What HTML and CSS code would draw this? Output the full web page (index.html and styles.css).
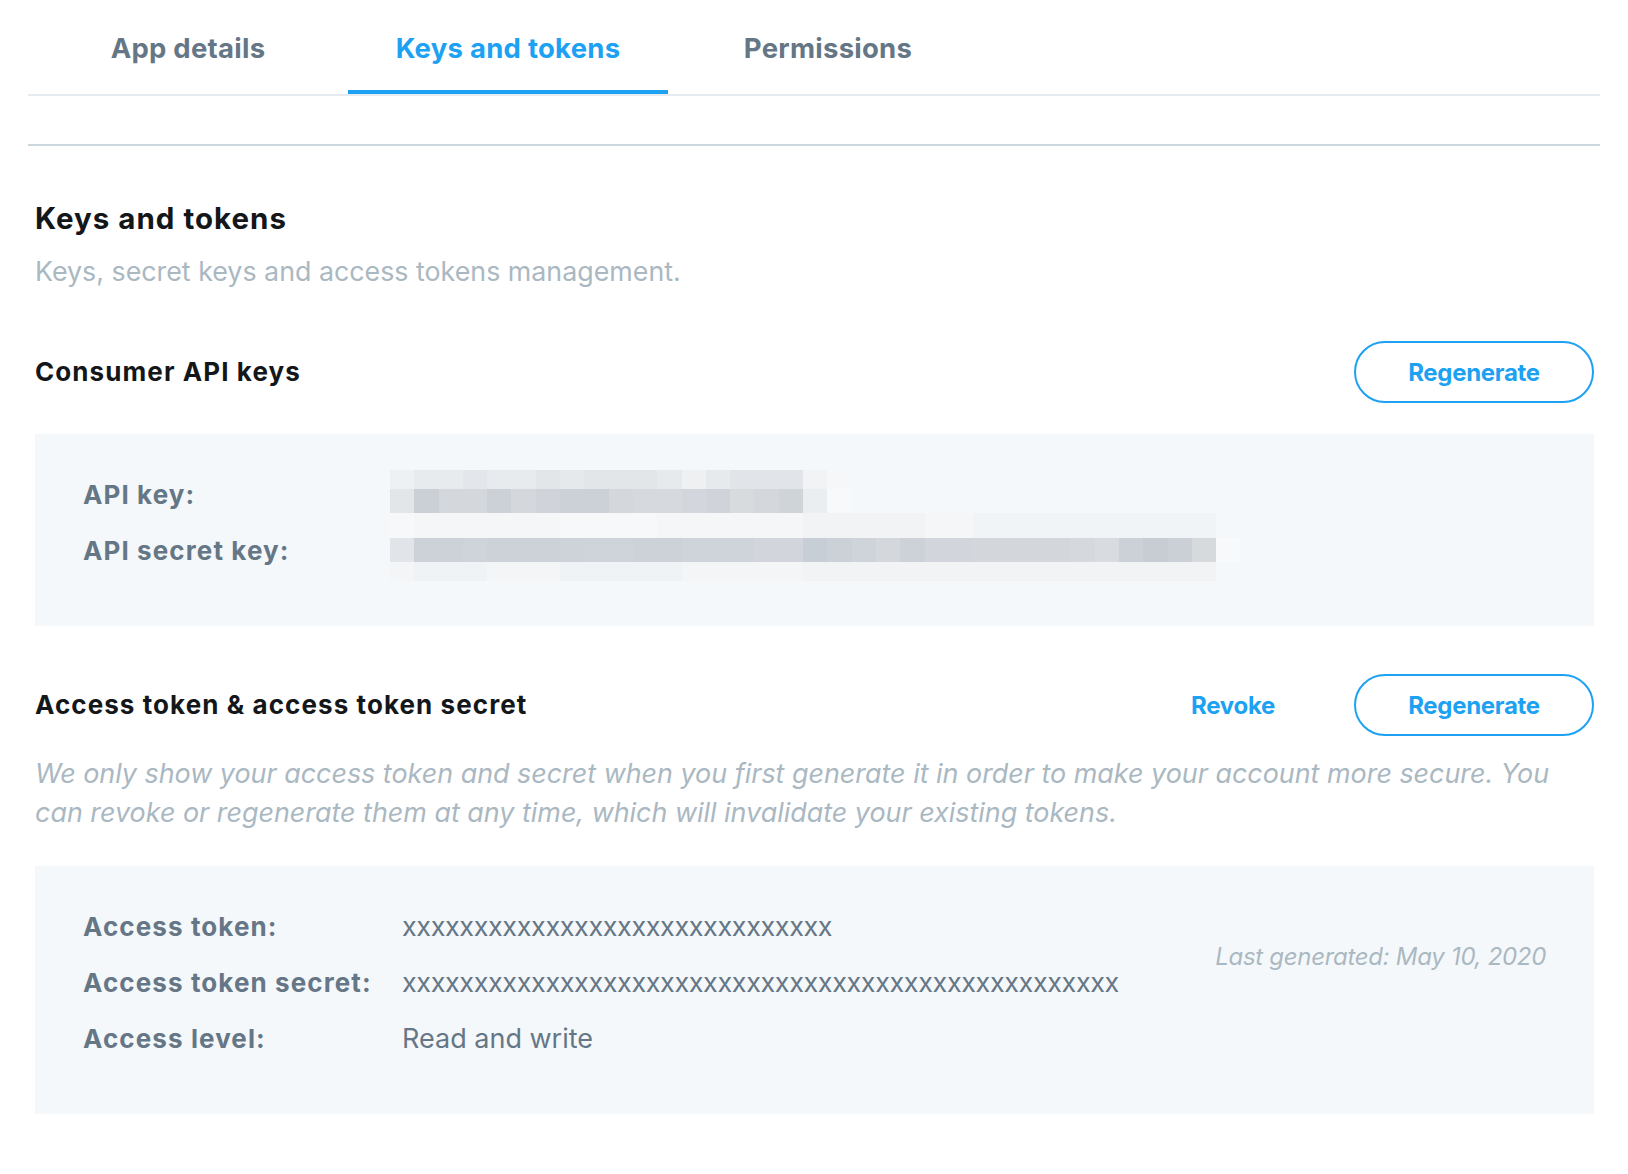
FILE: index.html
```html
<!DOCTYPE html>
<html lang="en">
<head>
<meta charset="utf-8">
<title>Keys and tokens</title>
<link rel="stylesheet" href="styles.css">
</head>
<body>
<div class="page">
  <nav class="tabs">
    <div class="tab">App details</div>
    <div class="tab active">Keys and tokens</div>
    <div class="tab">Permissions</div>
  </nav>
  <div class="divider"></div>

  <main class="content">
    <h1 class="title">Keys and tokens</h1>
    <p class="subtitle">Keys, secret keys and access tokens management.</p>

    <div class="section-head consumer-head">
      <h2 class="section-title">Consumer API keys</h2>
      <div class="actions">
        <button class="btn-outline">Regenerate</button>
      </div>
    </div>

    <div class="panel panel-keys">
      <div class="kv kv-keys">
        <div class="label">API key:</div>
        <div class="blurred" aria-label="hidden key">
          <div class="px-row r1"></div>
          <div class="px-row r2"></div>
          <div class="px-row r3"></div>
          <div class="px-row r4"></div>
          <div class="px-row r5"></div>
        </div>
        <div class="label">API secret key:</div>
      </div>
    </div>

    <div class="section-head access-head">
      <h2 class="section-title">Access token &amp; access token secret</h2>
      <div class="actions">
        <button class="btn-link">Revoke</button>
        <button class="btn-outline">Regenerate</button>
      </div>
    </div>
    <p class="note">We only show your access token and secret when you first generate it in order to make your account more secure. You can revoke or regenerate them at any time, which will invalidate your existing tokens.</p>

    <div class="panel panel-access">
      <div class="kv kv-access">
        <div class="label">Access token:</div>
        <div class="value token">xxxxxxxxxxxxxxxxxxxxxxxxxxxxxx</div>
        <div class="label">Access token secret:</div>
        <div class="value token">xxxxxxxxxxxxxxxxxxxxxxxxxxxxxxxxxxxxxxxxxxxxxxxxxx</div>
        <div class="label">Access level:</div>
        <div class="value">Read and write</div>
      </div>
      <div class="generated">Last generated: May 10, 2020</div>
    </div>
  </main>
</div>
</body>
</html>
```

FILE: styles.css
```css
* { box-sizing: border-box; }

html, body {
  margin: 0;
  padding: 0;
  background: #ffffff;
}

body {
  font-family: Inter, "Noto Sans", "Liberation Sans", sans-serif;
  color: #14171a;
}

.page {
  padding: 0 28px;
}

/* Tabs */
.tabs {
  display: flex;
  height: 96px;
  border-bottom: 2px solid #e6ecf0;
}

.tab {
  width: 320px;
  height: 94px;
  padding-top: 32px;
  text-align: center;
  font-size: 27.5px;
  line-height: 32px;
  font-weight: 700;
  letter-spacing: 0.25px;
  color: #657786;
}

.tab.active {
  color: #1da1f2;
  box-shadow: inset 0 -4px 0 #1da1f2;
}

.divider {
  margin-top: 48px;
  height: 2px;
  background: #ccd6dd;
}

/* Content */
.content {
  padding: 0 6px 60px 7px;
}

.title {
  margin: 54px 0 0;
  font-size: 29.5px;
  line-height: 36px;
  font-weight: 700;
  letter-spacing: 1px;
  color: #14171a;
}

.subtitle {
  margin: 17px 0 0;
  font-size: 26.8px;
  line-height: 36px;
  font-weight: 400;
  color: #aab8c2;
}

.section-head {
  display: flex;
  align-items: center;
  justify-content: space-between;
  height: 62px;
}

.consumer-head { margin-top: 52px; }
.access-head { margin-top: 48px; }

.section-title {
  margin: 0;
  font-size: 26px;
  line-height: 32px;
  font-weight: 700;
  letter-spacing: 1.08px;
  color: #14171a;
}

.actions {
  display: flex;
  align-items: center;
}

.btn-outline {
  width: 240px;
  height: 62px;
  border: 2px solid #1da1f2;
  border-radius: 31px;
  background: #ffffff;
  color: #1da1f2;
  font-family: inherit;
  font-size: 24px;
  font-weight: 700;
  letter-spacing: -0.3px;
  padding: 0;
  cursor: pointer;
}

.btn-link {
  margin-right: 79px;
  border: 0;
  background: none;
  padding: 0;
  color: #1da1f2;
  font-family: inherit;
  font-size: 24px;
  font-weight: 700;
  letter-spacing: -0.3px;
  cursor: pointer;
}

.note {
  margin: 18px 0 0;
  max-width: 1540px;
  font-size: 26.9px;
  line-height: 39px;
  font-style: italic;
  color: #aab8c2;
}

/* Panels */
.panel {
  background: #f5f8fa;
  padding: 33px 48px 47px;
}

.panel-keys { margin-top: 31px; }
.panel-access {
  margin-top: 34px;
  display: flex;
  justify-content: space-between;
  align-items: flex-start;
}

.kv {
  display: grid;
  grid-auto-rows: 56px;
  align-items: center;
}

.kv-keys { grid-template-columns: 307px 1fr; }
.kv-access { grid-template-columns: 319px 1fr; }

.label {
  font-size: 26px;
  line-height: 56px;
  font-weight: 700;
  letter-spacing: 1.1px;
  color: #657786;
}

.kv-keys .label { grid-column: 1; }

.value {
  font-size: 27px;
  line-height: 56px;
  font-weight: 400;
  color: #657786;
}

.value.token {
  letter-spacing: -0.4px;
}

.generated {
  margin-top: 40px;
  font-size: 24px;
  line-height: 36px;
  font-style: italic;
  letter-spacing: -0.3px;
  color: #aab8c2;
}

/* Pixelated (blurred) key */
.blurred {
  grid-column: 2;
  grid-row: 1 / span 2;
  align-self: start;
  margin-top: 3px;
  width: 851px;
}

.px-row { width: 851px; }
.r1 { height: 19px; }
.r2 { height: 24px; }
.r3 { height: 25px; }
.r4 { height: 24px; }
.r5 { height: 19px; }

.r1 {
  background: linear-gradient(90deg,
    #eef1f3 0 24.3px, #e8ebee 24.3px 72.9px, #e3e6ea 72.9px 97.2px,
    #e8ebee 97.2px 145.8px, #e3e6e9 145.8px 170.1px, #e6e9ec 170.1px 194.4px,
    #e3e6e9 194.4px 267.3px, #e7eaed 267.3px 291.6px, #eef0f2 291.6px 315.9px,
    #e7eaed 315.9px 340.2px, #e1e4e8 340.2px 413.1px, #f1f3f5 413.1px 437.4px,
    #f5f7f9 437.4px 461.7px, transparent 461.7px);
}

.r2 {
  background: linear-gradient(90deg,
    #e3e6e9 0 24.3px, #cbd0d6 24.3px 48.6px, #d4d8dc 48.6px 97.2px,
    #cbd1d7 97.2px 121.5px, #d4d8dc 121.5px 145.8px, #d0d4da 145.8px 170.1px,
    #cbd1d7 170.1px 218.7px, #d4d8dc 218.7px 243px, #d6dade 243px 291.6px,
    #d3d7dd 291.6px 315.9px, #d0d4da 315.9px 340.2px, #d7dbde 340.2px 364.5px,
    #d4d8dc 364.5px 388.8px, #cfd4d9 388.8px 413.1px, #ebeef1 413.1px 437.4px,
    #f7f9fa 437.4px 461.7px, transparent 461.7px);
}

.r3 {
  background: linear-gradient(90deg,
    #f6f8fa 0 24.3px, #f4f6f8 24.3px 170.1px, #f7f8fa 170.1px 267.3px,
    #f4f6f8 267.3px 413.1px, #f1f3f5 413.1px 534.6px, #f4f6f8 534.6px 583.2px,
    #f1f4f6 583.2px 826.2px, transparent 826.2px);
}

.r4 {
  background: linear-gradient(90deg,
    #e1e4e8 0 24.3px, #ccd2d8 24.3px 72.9px, #cfd4da 72.9px 97.2px,
    #ccd2d8 97.2px 170.1px, #cdd3d9 170.1px 194.4px, #cfd4da 194.4px 243px,
    #ccd2d8 243px 291.6px, #cfd4da 291.6px 364.5px, #d2d6dc 364.5px 413.1px,
    #c7ced5 413.1px 437.4px, #cbd1d7 437.4px 461.7px, #cfd4da 461.7px 486px,
    #d4d8dc 486px 510.3px, #ccd2d8 510.3px 534.6px, #d2d6dc 534.6px 583.2px,
    #d3d7dc 583.2px 680.4px, #d5d9dd 680.4px 704.7px, #d8dce0 704.7px 729px,
    #ccd1d7 729px 753.3px, #c7cdd3 753.3px 777.6px, #cbd0d6 777.6px 801.9px,
    #d6dadd 801.9px 826.2px, #f8f9fb 826.2px 850.5px, transparent 850.5px);
}

.r5 {
  background: linear-gradient(90deg,
    #f3f5f7 0 24.3px, #f0f3f5 24.3px 97.2px, #f3f5f7 97.2px 170.1px,
    #f0f3f5 170.1px 291.6px, #f3f5f7 291.6px 413.1px, #f1f3f5 413.1px 826.2px,
    transparent 826.2px);
}
```
